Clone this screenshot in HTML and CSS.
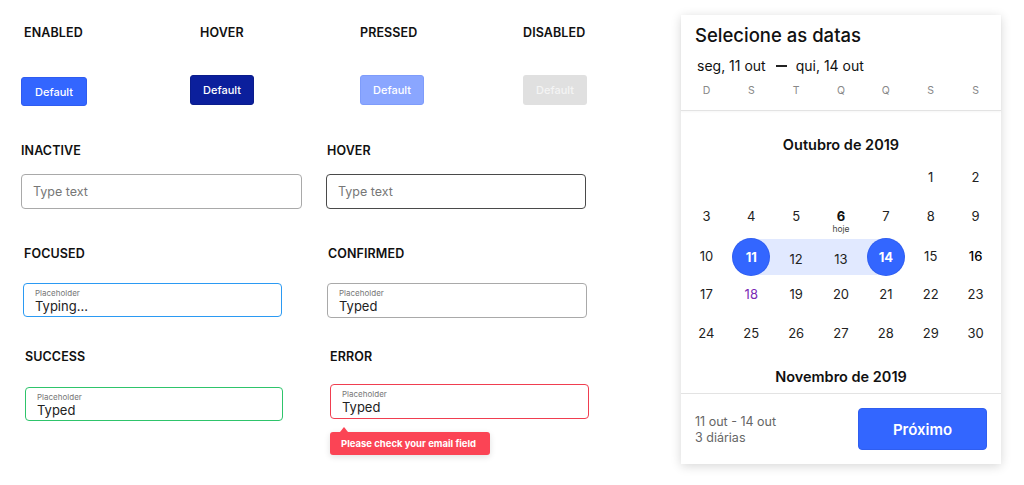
FILE: index.html
```html
<!DOCTYPE html>
<html lang="pt">
<head>
<meta charset="utf-8">
<title>UI states</title>
<link rel="stylesheet" href="styles.css">
</head>
<body>
<div class="page">
  <main class="states">
    <section class="btn-row">
      <div class="btn-col col-enabled">
        <h3 class="label">ENABLED</h3>
        <button class="btn btn-enabled">Default</button>
      </div>
      <div class="btn-col col-hover">
        <h3 class="label">HOVER</h3>
        <button class="btn btn-hover">Default</button>
      </div>
      <div class="btn-col col-pressed">
        <h3 class="label">PRESSED</h3>
        <button class="btn btn-pressed">Default</button>
      </div>
      <div class="btn-col col-disabled">
        <h3 class="label">DISABLED</h3>
        <button class="btn btn-disabled">Default</button>
      </div>
    </section>

    <section class="field-grid">
      <div class="field row1 f-inactive">
        <h3 class="label">INACTIVE</h3>
        <div class="input input-inactive"><span class="ph">Type text</span></div>
      </div>
      <div class="field row1 f-hover">
        <h3 class="label">HOVER</h3>
        <div class="input input-hover"><span class="ph">Type text</span></div>
      </div>
      <div class="field row2 f-focused">
        <h3 class="label">FOCUSED</h3>
        <div class="input input-focused"><span class="mini">Placeholder</span><span class="val">Typing...</span></div>
      </div>
      <div class="field row2 f-confirmed">
        <h3 class="label">CONFIRMED</h3>
        <div class="input input-confirmed"><span class="mini">Placeholder</span><span class="val">Typed</span></div>
      </div>
      <div class="field f-success">
        <h3 class="label">SUCCESS</h3>
        <div class="input input-success"><span class="mini">Placeholder</span><span class="val">Typed</span></div>
      </div>
      <div class="field f-error">
        <h3 class="label">ERROR</h3>
        <div class="input input-error"><span class="mini">Placeholder</span><span class="val">Typed</span></div>
        <div class="tip">Please check your email field</div>
      </div>
    </section>
  </main>

  <aside class="card">
    <header class="card-head">
      <h2 class="card-title">Selecione as datas</h2>
      <div class="range"><span>seg, 11 out</span><span class="dash"></span><span>qui, 14 out</span></div>
      <div class="week">
        <span>D</span><span>S</span><span>T</span><span>Q</span><span>Q</span><span>S</span><span>S</span>
      </div>
    </header>
    <div class="cal-body">
      <h4 class="month">Outubro de 2019</h4>
      <div class="days">
        <span></span><span></span><span></span><span></span><span></span><span>1</span><span>2</span>
        <span>3</span><span>4</span><span>5</span><span class="today">6<small>hoje</small></span><span>7</span><span>8</span><span>9</span>
        <span class="r3">10</span><span class="r3 sel start"><b>11</b></span><span class="r3 in">12</span><span class="r3 in">13</span><span class="r3 sel end"><b>14</b></span><span class="r3">15</span><span class="r3 strong">16</span>
        <span>17</span><span class="purple">18</span><span>19</span><span>20</span><span>21</span><span>22</span><span>23</span>
        <span>24</span><span>25</span><span>26</span><span>27</span><span>28</span><span>29</span><span>30</span>
      </div>
      <h4 class="month month-next">Novembro de 2019</h4>
    </div>
    <footer class="card-foot">
      <div class="summary"><div>11 out - 14 out</div><div>3 diárias</div></div>
      <button class="next">Próximo</button>
    </footer>
  </aside>
</div>
</body>
</html>
```

FILE: styles.css
```css
* { box-sizing: border-box; }
html, body { margin: 0; padding: 0; background: #fff; }
body {
  font-family: "Inter", "Noto Sans", sans-serif;
  color: #1a1a1a;
  width: 1024px;
  height: 485px;
  overflow: hidden;
}
.page {
  display: flex;
  align-items: flex-start;
}
.states {
  width: 681px;
  padding-top: 26px;
}
.label {
  margin: 0;
  font-size: 12.5px;
  line-height: 14px;
  font-weight: 600;
  letter-spacing: 0.1px;
  color: #111;
}

/* buttons */
.btn-row {
  display: flex;
  height: 80px;
}
.btn-col { display: flex; flex-direction: column; }
.btn-col .label { margin-bottom: 35px; }
.col-enabled { width: 169px; margin-left: 21px; }
.col-enabled .label { padding-left: 3px; margin-bottom: 37px; }
.col-hover { width: 170px; }
.col-hover .label { padding-left: 10px; }
.col-pressed { width: 163px; }
.btn {
  font-family: inherit;
  width: 64px;
  height: 30px;
  border-radius: 3px;
  border: 1px solid transparent;
  font-size: 11px;
  font-weight: 500;
  color: #fff;
  padding: 0;
}
.btn-enabled { background: #3366ff; border-color: #2f5cf0; width: 66px; height: 29px; }
.btn-hover { background: #0b1f9c; border-color: #0a1c8c; }
.btn-pressed { background: #8aa6ff; border-color: #7e9cfb; }
.btn-disabled { background: #e0e0e0; color: #f4f4f4; }

/* fields */
.field-grid {
  display: grid;
  grid-template-columns: 305px 280px;
  align-items: start;
  padding-left: 21px;
  margin-top: 38px;
}
.field { position: relative; }
.field .label { margin-bottom: 16px; }
.row1 { margin-bottom: 38px; }
.row2 { margin-bottom: 32px; }
.input {
  height: 35px;
  border: 1px solid #a9a9a9;
  border-radius: 4px;
  padding: 0 11px;
  display: flex;
  flex-direction: column;
  justify-content: center;
}
.f-inactive .input { width: 281px; }
.f-hover .label { padding-left: 1px; }
.f-hover .input { width: 260px; }
.ph { font-size: 12.5px; color: #777; }
.input-hover { border-color: #4a4a4a; }
.mini { font-size: 8px; line-height: 10px; color: #777; margin-top: 1px; }
.val { font-size: 13px; line-height: 16px; color: #222; }
.f-focused { margin-left: 2px; }
.f-focused .label { padding-left: 1px; margin-bottom: 22px; }
.input-focused { width: 259px; height: 34px; border: 1.5px solid #2b9af3; }
.f-confirmed { margin-left: 1px; }
.f-confirmed .label { padding-left: 1px; margin-bottom: 22px; }
.input-confirmed { width: 260px; height: 35px; }
.f-success { margin-left: 4px; }
.f-success .label { margin-bottom: 23px; }
.input-success { width: 258px; height: 34px; border: 1.5px solid #2ec46b; }
.f-error { margin-left: 4px; }
.f-error .label { margin-bottom: 20px; }
.input-error { width: 259px; height: 35px; border: 1.5px solid #f03e50; }
.tip {
  position: absolute;
  left: 0;
  top: 82px;
  width: 160px;
  height: 23px;
  background: #fb4455;
  color: #fff;
  border-radius: 3px;
  font-size: 9.5px;
  font-weight: 700;
  line-height: 23px;
  padding-left: 11px;
  box-shadow: 0 2px 6px rgba(0,0,0,0.12);
}
.tip::before {
  content: "";
  position: absolute;
  left: 10px;
  top: -5px;
  border-left: 4px solid transparent;
  border-right: 4px solid transparent;
  border-bottom: 5px solid #fb4455;
}

/* calendar card */
.card {
  margin-top: 15px;
  width: 320px;
  height: 449px;
  background: #fff;
  box-shadow: 0 2px 10px rgba(0,0,0,0.16);
  display: flex;
  flex-direction: column;
}
.card-head {
  padding: 11px 0 0 0;
  border-bottom: 1px solid #e3e3e3;
  box-shadow: 0 1px 2px rgba(0,0,0,0.04);
  height: 96px;
}
.card-title {
  margin: 0 0 0 14px;
  font-size: 18.5px;
  line-height: 18px;
  font-weight: 500;
  color: #111;
}
.range {
  margin: 12px 0 0 16px;
  display: flex;
  align-items: center;
  font-size: 14px;
  line-height: 20px;
  color: #111;
}
.dash {
  display: inline-block;
  width: 11px;
  height: 1.5px;
  background: #222;
  margin: 0 9px 0 10px;
}
.week {
  display: grid;
  grid-template-columns: repeat(7, 1fr);
  padding: 0 3px;
  margin-top: 8px;
  font-size: 10.5px;
  color: #888;
  text-align: center;
}
.cal-body {
  height: 282px;
  overflow: hidden;
}
.month {
  margin: 24px 0 0;
  text-align: center;
  font-size: 14.5px;
  line-height: 20px;
  font-weight: 600;
  color: #111;
}
.days {
  display: grid;
  grid-template-columns: repeat(7, 1fr);
  grid-auto-rows: 39px;
  padding: 2px 3px 0;
  isolation: isolate;
}
.days span {
  position: relative;
  display: flex;
  align-items: center;
  justify-content: center;
  font-size: 13px;
  color: #222;
}
.days .today { font-weight: 700; color: #111; }
.days .today small {
  position: absolute;
  top: 28px;
  left: 0; right: 0;
  text-align: center;
  font-size: 8.5px;
  line-height: 10px;
  font-weight: 400;
  color: #444;
}
.days .r3 { padding-top: 2px; }
.days .in { padding-top: 8px; }
.days .in::before {
  content: "";
  position: absolute;
  left: 0; right: 0;
  top: 4px; height: 36px;
  background: #e1e9ff;
  z-index: -1;
}
.days .sel::before {
  content: "";
  position: absolute;
  top: 4px; height: 36px;
  background: #e1e9ff;
  z-index: -1;
}
.days .start::before { left: 50%; right: 0; }
.days .end::before { left: 0; right: 50%; }
.days .sel { padding-top: 0; }
.days .sel b {
  width: 36px;
  height: 36px;
  margin-top: 5px;
  border-radius: 50%;
  background: #3366ff;
  color: #fff;
  font-weight: 700;
  display: flex;
  align-items: center;
  justify-content: center;
  box-shadow: 0 0 0 1px #2f5ef0;
}
.days .strong { color: #000; font-weight: 500; }
.days .purple { color: #7a2bb5; }
.month-next { margin-top: 15px; }
.card-foot {
  flex: 1;
  border-top: 1px solid #e3e3e3;
  display: flex;
  align-items: center;
  justify-content: space-between;
  padding: 0 14px 0 14px;
}
.summary {
  font-size: 12.5px;
  line-height: 16px;
  color: #666;
  margin-top: 2px;
}
.next {
  font-family: inherit;
  width: 129px;
  height: 42px;
  border: 1px solid #2f5ef0;
  border-radius: 4px;
  background: #3366ff;
  color: #fff;
  font-size: 15px;
  font-weight: 600;
}
```
